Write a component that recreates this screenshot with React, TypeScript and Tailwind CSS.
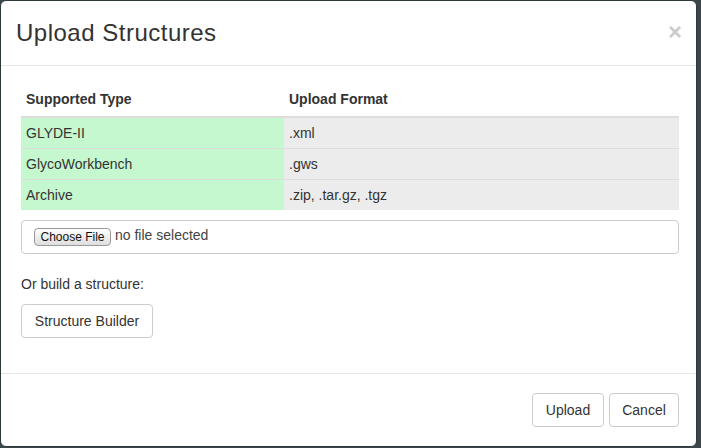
const rows = [
  { type: 'GLYDE-II', format: '.xml' },
  { type: 'GlycoWorkbench', format: '.gws' },
  { type: 'Archive', format: '.zip, .tar.gz, .tgz' },
];

const App = () => {
  return (
    <div className="h-screen w-full overflow-hidden bg-[#3a464a] font-['Liberation_Sans',Arial,sans-serif] text-[14px] text-[#333]">
      <div className="w-[697px] rounded-[6px] border border-[#2e383b] bg-white">
        {/* header */}
        <div className="flex h-[65px] items-center justify-between border-b border-[#e5e5e5] pl-[15px] pr-[14px]">
          <h4 className="text-[24px] leading-[34px] tracking-[0.5px] text-[#333]">Upload Structures</h4>
          <button className="-mt-[3px] text-[24px] font-bold leading-none text-black opacity-20">×</button>
        </div>

        {/* body */}
        <div className="pl-[20px] pr-[17px] pt-[15px] pb-[35px]">
          <div className="grid grid-cols-[263px_1fr]">
            <div className="border-b-2 border-[#ddd] px-[5px] pt-[8px] pb-[7px] font-bold leading-[20px]">Supported Type</div>
            <div className="border-b-2 border-[#ddd] px-[5px] pt-[8px] pb-[7px] font-bold leading-[20px]">Upload Format</div>
            {rows.map((r, i) => (
              <div key={r.type} className="contents">
                <div
                  className={`bg-[#c6f8cf] px-[5px] py-[5px] leading-[20px] ${i > 0 ? 'border-t border-[#ddd]' : ''}`}
                >
                  {r.type}
                </div>
                <div
                  className={`bg-[#ececec] px-[5px] py-[5px] leading-[20px] ${i > 0 ? 'border-t border-[#ddd]' : ''}`}
                >
                  {r.format}
                </div>
              </div>
            ))}
          </div>

          {/* file input */}
          <div className="mt-[10px] flex h-[34px] items-center rounded-[4px] border border-[#ccc] pl-[12px]">
            <span className="flex h-[18px] w-[77px] items-center justify-center rounded-[4px] border border-[#9a9a9a] bg-gradient-to-b from-white to-[#dedede] text-[12px] leading-none text-[#111]">
              Choose File
            </span>
            <span className="ml-[4px] -mt-[3px] text-[14px] text-[#444]">no file selected</span>
          </div>

          <p className="mt-[20px] leading-[20px]">Or build a structure:</p>

          <button className="mt-[10px] h-[34px] w-[132px] rounded-[4px] border border-[#ccc] bg-white leading-[20px] text-[#333]">
            Structure Builder
          </button>
        </div>

        {/* footer */}
        <div className="flex justify-end gap-[5px] border-t border-[#e5e5e5] pl-[20px] pr-[17px] pt-[19px] pb-[19px]">
          <button className="h-[34px] w-[72px] rounded-[4px] border border-[#ccc] bg-white leading-[20px] text-[#333]">Upload</button>
          <button className="h-[34px] w-[70px] rounded-[4px] border border-[#ccc] bg-white leading-[20px] text-[#333]">Cancel</button>
        </div>
      </div>
    </div>
  );
};

export default App;
